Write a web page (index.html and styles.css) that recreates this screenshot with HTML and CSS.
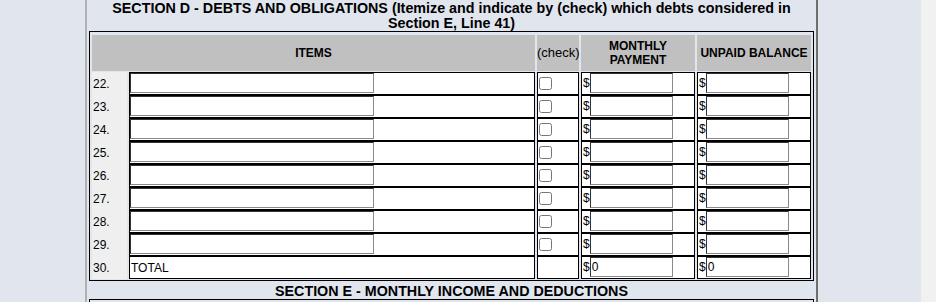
FILE: index.html
```html
<!DOCTYPE html>
<html lang="en">
<head>
<meta charset="utf-8">
<title>Section D - Debts and Obligations</title>
<link rel="stylesheet" href="styles.css">
</head>
<body>
<div class="page">
  <main class="viewport">
    <div class="form-box">
      <h2 class="section-title">SECTION D - DEBTS AND OBLIGATIONS (Itemize and indicate by (check) which debts considered in<br>Section E, Line 41)</h2>
      <table class="grid">
        <colgroup>
          <col class="c-num"><col class="c-item"><col class="c-check"><col class="c-money"><col class="c-money">
        </colgroup>
        <thead>
          <tr>
            <th colspan="2">ITEMS</th>
            <th class="th-check">(check)</th>
            <th>MONTHLY<br>PAYMENT</th>
            <th>UNPAID BALANCE</th>
          </tr>
        </thead>
        <tbody>
          <tr class="row"><td class="num">22.</td><td class="field"><input class="item-input" type="text"></td><td class="field"><input class="chk" type="checkbox"></td><td class="field"><div class="money"><span class="cur">$</span><input class="money-input" type="text"></div></td><td class="field"><div class="money"><span class="cur">$</span><input class="money-input" type="text"></div></td></tr>
          <tr class="row"><td class="num">23.</td><td class="field"><input class="item-input" type="text"></td><td class="field"><input class="chk" type="checkbox"></td><td class="field"><div class="money"><span class="cur">$</span><input class="money-input" type="text"></div></td><td class="field"><div class="money"><span class="cur">$</span><input class="money-input" type="text"></div></td></tr>
          <tr class="row"><td class="num">24.</td><td class="field"><input class="item-input" type="text"></td><td class="field"><input class="chk" type="checkbox"></td><td class="field"><div class="money"><span class="cur">$</span><input class="money-input" type="text"></div></td><td class="field"><div class="money"><span class="cur">$</span><input class="money-input" type="text"></div></td></tr>
          <tr class="row"><td class="num">25.</td><td class="field"><input class="item-input" type="text"></td><td class="field"><input class="chk" type="checkbox"></td><td class="field"><div class="money"><span class="cur">$</span><input class="money-input" type="text"></div></td><td class="field"><div class="money"><span class="cur">$</span><input class="money-input" type="text"></div></td></tr>
          <tr class="row"><td class="num">26.</td><td class="field"><input class="item-input" type="text"></td><td class="field"><input class="chk" type="checkbox"></td><td class="field"><div class="money"><span class="cur">$</span><input class="money-input" type="text"></div></td><td class="field"><div class="money"><span class="cur">$</span><input class="money-input" type="text"></div></td></tr>
          <tr class="row"><td class="num">27.</td><td class="field"><input class="item-input" type="text"></td><td class="field"><input class="chk" type="checkbox"></td><td class="field"><div class="money"><span class="cur">$</span><input class="money-input" type="text"></div></td><td class="field"><div class="money"><span class="cur">$</span><input class="money-input" type="text"></div></td></tr>
          <tr class="row"><td class="num">28.</td><td class="field"><input class="item-input" type="text"></td><td class="field"><input class="chk" type="checkbox"></td><td class="field"><div class="money"><span class="cur">$</span><input class="money-input" type="text"></div></td><td class="field"><div class="money"><span class="cur">$</span><input class="money-input" type="text"></div></td></tr>
          <tr class="row"><td class="num">29.</td><td class="field"><input class="item-input" type="text"></td><td class="field"><input class="chk" type="checkbox"></td><td class="field"><div class="money"><span class="cur">$</span><input class="money-input" type="text"></div></td><td class="field"><div class="money"><span class="cur">$</span><input class="money-input" type="text"></div></td></tr>
          <tr class="row"><td class="num">30.</td><td class="field total-label">TOTAL</td><td class="field"></td><td class="field"><div class="money"><span class="cur">$</span><input class="money-input" type="text" value="0" readonly></div></td><td class="field"><div class="money"><span class="cur">$</span><input class="money-input" type="text" value="0" readonly></div></td></tr>
        </tbody>
      </table>
      <h2 class="section-title next-title">SECTION E - MONTHLY INCOME AND DEDUCTIONS</h2>
      <table class="grid">
        <thead>
          <tr><th></th><th></th></tr>
        </thead>
      </table>
    </div>
  </main>
  <div class="scroll-track"></div>
</div>
</body>
</html>
```

FILE: styles.css
```css
html, body {
  margin: 0;
  padding: 0;
}

body {
  font-family: "Liberation Sans", Arial, sans-serif;
  font-size: 12px;
  color: #000;
  background: #e0e5ee;
}

.page {
  display: flex;
  height: 302px;
  overflow: hidden;
}

.viewport {
  flex: 1;
  min-width: 0;
}

.scroll-track {
  width: 15px;
  flex: none;
  background: #f1f1f1;
}

.form-box {
  margin-left: 85px;
  width: 729px;
  border-left: 2px solid #b0b0b0;
  border-right: 2px solid #6e6e6e;
  min-height: 302px;
}

.section-title {
  margin: 0;
  padding-top: 1px;
  font-size: 14.3px;
  line-height: 15px;
  font-weight: bold;
  text-align: center;
}

.next-title {
  padding-top: 3px;
}

.grid {
  margin: 0 2px;
  width: 725px;
  table-layout: fixed;
  border: 1px solid #000;
  border-collapse: separate;
  border-spacing: 2px 0;
  padding: 3px 0 1px 0;
}

.c-num { width: 35px; }
.c-item { width: 406px; }
.c-check { width: 42px; }
.c-money { width: 114px; }

.grid th {
  background: #c0c0c0;
  background-clip: padding-box;
  border-bottom: 1px solid transparent;
  height: 36px;
  padding: 0;
  font-size: 12px;
  line-height: 14px;
  font-weight: bold;
  text-align: center;
  vertical-align: middle;
}

.grid th.th-check {
  font-weight: normal;
  font-size: 13px;
  white-space: nowrap;
}

.row {
  height: 23px;
}

.num {
  background: #efefef;
  padding: 0 0 0 1px;
  vertical-align: middle;
  font-size: 12px;
}

.field {
  background: #fff;
  border: 1px solid #000;
  padding: 0;
  vertical-align: top;
}

.total-label {
  vertical-align: middle;
  padding-left: 1px;
  font-size: 12px;
}

.item-input,
.money-input {
  display: block;
  box-sizing: border-box;
  height: 20px;
  margin: 0;
  padding: 0 1px;
  border: 1px solid;
  border-color: #333 #8a8a8a #8a8a8a #333;
  border-radius: 0;
  background: #fff;
  font-family: "Liberation Sans", Arial, sans-serif;
  font-size: 12px;
  color: #000;
  outline: none;
}

.item-input {
  width: 244px;
}

.money {
  display: flex;
  align-items: flex-start;
}

.cur {
  font-size: 12px;
  line-height: 20px;
  padding-left: 1px;
}

.money-input {
  width: 83px;
}

.chk {
  display: block;
  width: 13px;
  height: 13px;
  margin: 4px 0 0 1px;
}
```
